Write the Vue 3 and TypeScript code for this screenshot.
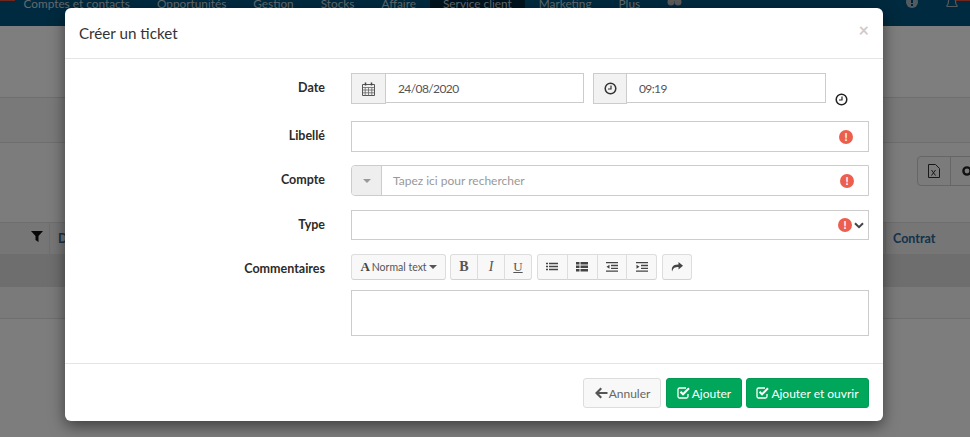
<script setup lang="ts">
const navItems = [
  { label: 'Comptes et contacts', active: false },
  { label: 'Opportunités', active: false },
  { label: 'Gestion', active: false },
  { label: 'Stocks', active: false },
  { label: 'Affaire', active: false },
  { label: 'Service client', active: true },
  { label: 'Marketing', active: false },
  { label: 'Plus', active: false },
]
</script>

<template>
  <div class="page">
    <nav class="nav">
      <span v-for="item in navItems" :key="item.label" class="nav-item" :class="{ active: item.active }">{{ item.label }}</span>
      <svg class="nav-glyph" width="15" height="12" viewBox="0 0 15 12"><circle cx="4" cy="5" r="3.5" fill="#b5b5b5"/><circle cx="11" cy="5" r="3.5" fill="#b5b5b5"/><rect x="6" y="1" width="3" height="3" fill="#b5b5b5"/></svg>
      <span class="nav-right">
        <svg width="12" height="12" viewBox="0 0 12 12"><circle cx="6" cy="6" r="6" fill="#a9b7c0"/><rect x="5" y="2" width="2" height="5" fill="#004a70"/><rect x="5" y="8" width="2" height="2" fill="#004a70"/></svg>
        <svg width="14" height="14" viewBox="0 0 14 14"><path d="M2 9.500c1.500-1 1.500-3 1.500-4.500a3.500 3.500 0 0 1 7 0c0 1.500 0 3.500 1.500 4.500v1H2z" fill="none" stroke="#a9b7c0" stroke-width="1.200"/></svg>
      </span>
      <i class="mark mark-l"></i>
      <i class="mark mark-r"></i>
    </nav>
    <div class="band band-a"></div>
    <div class="band band-b"></div>
    <div class="band band-c">
      <div class="bg-tools">
        <span class="bg-tool">
          <svg width="12" height="14" viewBox="0 0 12 14"><path d="M.5.500h7l4 4v9H.5z" fill="none" stroke="#333"/><path d="M3.500 6l4 5.500M7.500 6l-4 5.500" stroke="#333"/></svg>
        </span>
        <span class="bg-tool">
          <svg width="12" height="12" viewBox="0 0 12 12"><circle cx="6" cy="6" r="3.600" fill="none" stroke="#222" stroke-width="2.400"/></svg>
        </span>
      </div>
    </div>
    <div class="table-head">
      <svg class="bg-filter" width="12" height="11" viewBox="0 0 12 11"><path d="M0 0h12L7.500 5v6L4.500 9V5z" fill="#111"/></svg>
      <i class="th-sep sep-l"></i>
      <span class="th-d">D</span>
      <i class="th-sep sep-r"></i>
      <span class="th-c">Contrat</span>
    </div>
    <div class="table-row row-a"></div>
    <div class="table-row row-b"></div>

    <div class="overlay">
      <div class="modal">
        <header class="modal-head">
          <h2 class="modal-title">Créer un ticket</h2>
          <span class="close">×</span>
        </header>
        <form class="modal-body" @submit.prevent>
          <div class="row row-date">
            <label class="lbl">Date</label>
            <div class="field date-field">
              <div class="group g-date">
                <span class="addon">
                  <svg width="13" height="14" viewBox="0 0 13 14"><path d="M.5 2.500h12v11H.5z" fill="none" stroke="#555" stroke-width="1"/><path d="M.5 5.500h12M.5 8h12M.5 10.800h12M3.200 5.500v8M6.500 5.500v8M9.800 5.500v8" stroke="#666" stroke-width=".8"/><path d="M3.500.5v3M9.500.5v3" stroke="#444" stroke-width="1.500"/></svg>
                </span>
                <input class="inp" value="24/08/2020" />
              </div>
              <div class="group g-time">
                <span class="addon">
                  <svg width="13" height="13" viewBox="0 0 13 13"><circle cx="6.500" cy="6.500" r="5.300" fill="none" stroke="#333" stroke-width="1.500"/><path d="M7 3.500v3.500H4" fill="none" stroke="#333" stroke-width="1.200"/></svg>
                </span>
                <input class="inp" value="09:19" />
              </div>
              <svg class="clock-out" width="13" height="13" viewBox="0 0 13 13"><circle cx="6.500" cy="6.500" r="5.300" fill="none" stroke="#222" stroke-width="1.500"/><path d="M7 3.500v3.500H4" fill="none" stroke="#222" stroke-width="1.200"/></svg>
            </div>
          </div>

          <div class="row row-libelle">
            <label class="lbl">Libellé</label>
            <div class="box">
              <span class="flex-fill"></span>
              <span class="warn">!</span>
            </div>
          </div>

          <div class="row row-compte">
            <label class="lbl">Compte</label>
            <div class="box rounded-left">
              <span class="caret-box"><i class="caret"></i></span>
              <span class="placeholder">Tapez ici pour rechercher</span>
              <span class="warn warn-c">!</span>
            </div>
          </div>

          <div class="row row-type">
            <label class="lbl">Type</label>
            <div class="box">
              <span class="flex-fill"></span>
              <span class="warn warn-t">!</span>
              <svg class="chev" width="10" height="7" viewBox="0 0 10 7"><path d="M1 1.200l4 4 4-4" fill="none" stroke="#444" stroke-width="2"/></svg>
            </div>
          </div>

          <div class="row row-comment">
            <label class="lbl">Commentaires</label>
            <div class="editor">
              <div class="toolbar">
                <button type="button" class="tb tb-style"><b class="a-glyph">A</b><span>Normal text</span><i class="caret dark"></i></button>
                <div class="tb-group">
                  <button type="button" class="tb serif bold">B</button>
                  <button type="button" class="tb serif ital">I</button>
                  <button type="button" class="tb serif und">U</button>
                </div>
                <div class="tb-group">
                  <button type="button" class="tb w30">
                    <svg width="12" height="10" viewBox="0 0 12 10"><path d="M0 1h2M3 1h9M0 4h2M3 4h9M0 7h2M3 7h9" stroke="#444" stroke-width="1.500" transform="translate(0 .5)"/></svg>
                  </button>
                  <button type="button" class="tb w30">
                    <svg width="12" height="10" viewBox="0 0 12 10"><path d="M0 0h3.500v2.500H0zM4.500 0H12v2.500H4.500zM0 3.500h3.500V6H0zM4.500 3.500H12V6H4.500zM0 7h3.500v2.500H0zM4.500 7H12v2.500H4.500z" fill="#444"/></svg>
                  </button>
                  <button type="button" class="tb w30">
                    <svg width="12" height="10" viewBox="0 0 12 10"><path d="M0 .7h12M5 3.500h7M5 6.300h7M0 9.200h12" stroke="#444" stroke-width="1.300"/><path d="M3.500 2.800v4L.5 4.800z" fill="#444"/></svg>
                  </button>
                  <button type="button" class="tb w30">
                    <svg width="12" height="10" viewBox="0 0 12 10"><path d="M0 .7h12M5 3.500h7M5 6.300h7M0 9.200h12" stroke="#444" stroke-width="1.300"/><path d="M.5 2.800v4l3-2z" fill="#444"/></svg>
                  </button>
                </div>
                <button type="button" class="tb w31">
                  <svg width="12" height="10" viewBox="0 0 12 10"><path d="M7.500 0L12 3.700 7.500 7.400V5C4 5 2 5.700 1.200 9.500 0 6 1.500 2.300 7.500 2.400z" fill="#444"/></svg>
                </button>
              </div>
              <div class="area"></div>
            </div>
          </div>
        </form>
        <footer class="modal-foot">
          <button type="button" class="btn btn-cancel">
            <svg width="14" height="12" viewBox="0 0 14 12"><path d="M6.500.5L1 6l5.500 5.500L8 10 5 7h8.500V5H5l3-3z" fill="#555"/></svg>Annuler
          </button>
          <button type="button" class="btn btn-ok">
            <svg width="14" height="12" viewBox="0 0 14 12"><path d="M11 7v2.500A1.500 1.500 0 0 1 9.500 11h-7A1.500 1.500 0 0 1 1 9.500v-7A1.500 1.500 0 0 1 2.500 1H9" fill="none" stroke="#fff" stroke-width="1.300"/><path d="M3.500 4.800l2.500 2.500 6-6" fill="none" stroke="#fff" stroke-width="2"/></svg>Ajouter
          </button>
          <button type="button" class="btn btn-ok">
            <svg width="14" height="12" viewBox="0 0 14 12"><path d="M11 7v2.500A1.500 1.500 0 0 1 9.500 11h-7A1.500 1.500 0 0 1 1 9.500v-7A1.500 1.500 0 0 1 2.500 1H9" fill="none" stroke="#fff" stroke-width="1.300"/><path d="M3.500 4.800l2.500 2.500 6-6" fill="none" stroke="#fff" stroke-width="2"/></svg>Ajouter et ouvrir
          </button>
        </footer>
      </div>
    </div>
  </div>
</template>

<style>
html, body { margin: 0; overflow: hidden; }
</style>

<style scoped>
.page {
  position: relative;
  width: 970px;
  height: 437px;
  overflow: hidden;
  background: #fafafa;
  font-family: Lato, "Noto Sans", sans-serif;
  font-size: 12px;
  color: #333;
}
.nav {
  position: relative;
  display: flex;
  height: 26px;
  align-items: flex-start;
  background: #00547f;
  overflow: hidden;
  color: #c4d2da;
  font-size: 11.800px;
  padding-left: 10px;
  box-sizing: border-box;
}
.mark { position: absolute; top: 0; height: 1px; background: #e04a3f; }
.mark-l { left: 0; width: 15px; }
.mark-r { right: 0; width: 14px; }
.nav-item {
  padding: 0 13.500px;
  height: 29px;
  line-height: 12px;
  margin-top: -2px;
  white-space: nowrap;
}
.nav-item.active { background: #00263d; }
.nav-glyph { margin: -3px 0 0 13px; }
.nav-right { margin-left: auto; display: flex; gap: 27px; padding-right: 11px; margin-top: -4px; }
.band { border-bottom: 1px solid #ddd; box-sizing: border-box; }
.band-a { height: 72px; background: #fcfcfc; }
.band-b { height: 45px; background: #f2f2f2; }
.band-c { height: 80px; background: #f9f9f9; display: flex; justify-content: flex-end; padding-top: 13px; align-items: flex-start; }
.bg-tools { display: flex; height: 30px; margin-right: -14px; }
.bg-tool { width: 34px; border: 1px solid #ccc; background: #f7f7f7; box-sizing: border-box; display: flex; align-items: center; justify-content: center; margin-left: -1px; height: 30px; }
.bg-tool:first-child { border-radius: 4px 0 0 4px; }
.table-head { position: relative; height: 32px; background: #ececec; border-bottom: 1px solid #ddd; box-sizing: border-box; font-weight: 700; font-size: 12.500px; color: #2a6496; }
.th-sep { position: absolute; top: 0; bottom: 0; width: 1px; background: #ddd; }
.sep-l { left: 49px; }
.sep-r { left: 885px; }
.bg-filter { position: absolute; left: 31px; top: 8px; }
.th-d { position: absolute; left: 58px; top: 8px; }
.th-c { position: absolute; left: 893px; top: 8px; }
.table-row { height: 32px; border-bottom: 1px solid #ddd; box-sizing: border-box; }
.row-a { background: #dcdcdc; }
.row-b { background: #f5f5f5; }

.overlay {
  position: absolute;
  inset: 0;
  background: rgba(0, 0, 0, .5);
}
.modal {
  position: absolute;
  left: 65px;
  top: 8px;
  width: 818px;
  height: 413px;
  background: #fff;
  border-radius: 6px;
  box-shadow: 0 5px 15px rgba(0, 0, 0, .5);
  display: flex;
  flex-direction: column;
}
.modal-head {
  height: 51px;
  box-sizing: border-box;
  border-bottom: 1px solid #e5e5e5;
  display: flex;
  align-items: center;
  justify-content: space-between;
  padding: 0 14px;
}
.modal-title { margin: 0; font-size: 15.200px; font-weight: 400; color: #333; }
.close { font-size: 18px; font-weight: 700; color: #ccc; line-height: 1; margin-top: -6px; }
.modal-body { flex: 1; padding: 14px 14px 0 0; box-sizing: border-box; }
.row { display: flex; }
.row-libelle { margin-top: 15px; }
.row-compte { margin-top: 13px; }
.row-type { margin-top: 14px; }
.row-comment { margin-top: 14px; }
.lbl {
  width: 286px;
  flex: none;
  text-align: right;
  font-weight: 700;
  font-size: 12.500px;
  color: #2b2b2b;
  line-height: 29px;
  padding-right: 26px;
  box-sizing: border-box;
}
.row-comment .lbl { line-height: 30px; }
.field { flex: 1; }
.date-field { display: flex; align-items: flex-start; }
.group { display: flex; height: 31px; }
.g-date { width: 233px; }
.g-time { width: 233px; margin-left: 9px; }
.addon {
  width: 35px;
  height: 31px;
  box-sizing: border-box;
  flex: none;
  background: #f2f2f2;
  border: 1px solid #ccc;
  display: flex;
  align-items: center;
  justify-content: center;
}
.g-time .addon { width: 34px; }
.inp {
  flex: 1;
  min-width: 0;
  height: 30px;
  box-sizing: border-box;
  border: 1px solid #ccc;
  border-left: 0;
  padding: 0 12px;
  font: inherit;
  letter-spacing: -.6px;
  color: #555;
  outline: none;
}
.clock-out { margin: 20px 0 0 9px; }
.box {
  flex: 1;
  height: 31px;
  box-sizing: border-box;
  border: 1px solid #ccc;
  display: flex;
  align-items: center;
}
.row-type .box { height: 30px; }
.flex-fill { flex: 1; }
.rounded-left { border-radius: 4px 0 0 4px; }
.caret-box {
  width: 29px;
  align-self: stretch;
  background: #eee;
  border-right: 1px solid #ccc;
  border-radius: 3px 0 0 3px;
  display: flex;
  align-items: center;
  justify-content: center;
}
.caret {
  display: inline-block;
  width: 0;
  height: 0;
  border-left: 4px solid transparent;
  border-right: 4px solid transparent;
  border-top: 4px solid #999;
}
.caret.dark { border-top-color: #555; margin-left: 2px; }
.placeholder { flex: 1; padding-left: 11px; color: #999; }
.warn {
  width: 14px;
  height: 14px;
  border-radius: 50%;
  background: #ec5f4f;
  color: #fff;
  font-size: 11px;
  font-weight: 700;
  line-height: 14px;
  text-align: center;
  margin-right: 15px;
}
.warn-c { margin-right: 14px; }
.warn-t { margin-right: 2px; }
.chev { margin-right: 4px; }
.editor { flex: 1; }
.toolbar { display: flex; gap: 5px; height: 26px; }
.tb {
  height: 26px;
  box-sizing: border-box;
  border: 1px solid #ddd;
  border-bottom-color: #d2d2d2;
  border-radius: 3px;
  background: #f8f8f8;
  padding: 0;
  display: flex;
  align-items: center;
  justify-content: center;
  color: #555;
  font-family: inherit;
}
.tb-style { width: 95px; font-size: 10.500px; margin-right: -1px; }
.a-glyph { font-family: "Liberation Serif", serif; font-size: 13px; margin-right: 2px; color: #444; }
.tb-group { display: flex; }
.tb-group .tb { border-radius: 0; margin-left: -1px; }
.tb-group .tb:first-child { border-radius: 3px 0 0 3px; margin-left: 0; }
.tb-group .tb:last-child { border-radius: 0 3px 3px 0; }
.serif { font-family: "Liberation Serif", serif; width: 28px; font-size: 14px; color: #555; }
.bold { font-weight: 700; }
.ital { font-style: italic; }
.und { text-decoration: underline; font-size: 13px; }
.w30 { width: 30.750px; }
.w31 { width: 30px; }
.area { margin-top: 10px; height: 46px; box-sizing: border-box; border: 1px solid #ccc; }
.modal-foot {
  height: 58px;
  box-sizing: border-box;
  border-top: 1px solid #e5e5e5;
  display: flex;
  justify-content: flex-end;
  gap: 4px;
  padding: 14px 14px 0 0;
}
.btn {
  height: 30px;
  box-sizing: border-box;
  border-radius: 3px;
  font-family: inherit;
  font-size: 12px;
  display: flex;
  align-items: center;
  justify-content: center;
  gap: 1px;
  padding: 0;
}
.btn-cancel { width: 78px; margin-right: 1px; background: #f8f8f8; border: 1px solid #ddd; color: #666; }
.btn-ok { background: #00a65a; border: 1px solid #009a53; color: #fff; width: 76px; }
.btn-ok:last-child { width: 123px; }
</style>
